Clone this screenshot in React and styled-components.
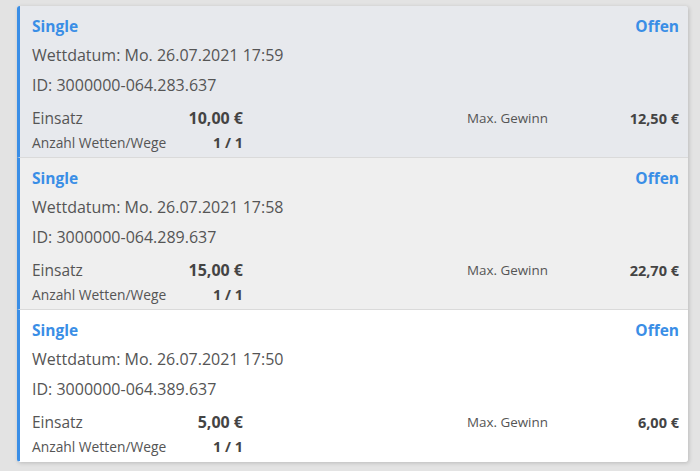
import styled, { createGlobalStyle } from "styled-components";

const GlobalStyle = createGlobalStyle`
    html, body {
        margin: 0;
        padding: 0;
        background: #e3e3e3;
        font-family: "Open Sans", "Noto Sans", sans-serif;
    }
`;

const Page = styled.div`
    width: 700px;
    height: 471px;
    padding: 6px 12px 0 17px;
    box-sizing: border-box;
    background: #e3e3e3;
`;

const List = styled.div`
    display: flex;
    flex-direction: column;
    width: 671px;
    border-radius: 3px;
    box-shadow: 1px 1px 4px rgba(0, 0, 0, 0.18);
`;

const Card = styled.div`
    background: ${(p) => p.$bg};
    border-left: 3px solid #3a8ee6;
    border-bottom: 1px solid ${(p) => (p.$last ? "transparent" : "#dadada")};
    border-radius: ${(p) => p.$radius};
    padding: 10px 9px 6px 12px;
    color: #555;
`;

const Header = styled.div`
    display: flex;
    justify-content: space-between;
    align-items: center;
    height: 20px;
    font-size: 15.5px;
    font-weight: 700;
    color: #3a8ee6;
`;

const InfoLine = styled.div`
    font-size: 16px;
    line-height: 20px;
    margin-top: ${(p) => p.$gap}px;
    color: #555;
`;

const Stakes = styled.div`
    display: grid;
    grid-template-columns: 211px 1fr 212px;
    margin-top: 13px;
`;

const Group = styled.div`
    display: flex;
    flex-direction: column;
    gap: 5px;
`;

const Pair = styled.div`
    display: flex;
    justify-content: space-between;
    align-items: center;
    height: ${(p) => (p.$small ? 18 : 20)}px;
`;

const Label = styled.span`
    font-size: ${(p) => p.$size}px;
    color: #555;
`;

const Value = styled.span`
    font-size: ${(p) => p.$size}px;
    font-weight: 700;
    color: #444;
`;

const bets = [
    { date: "Mo. 26.07.2021 17:59", id: "3000000-064.283.637", stake: "10,00 €", win: "12,50 €", bg: "#e7e9ed" },
    { date: "Mo. 26.07.2021 17:58", id: "3000000-064.289.637", stake: "15,00 €", win: "22,70 €", bg: "#efefef" },
    { date: "Mo. 26.07.2021 17:50", id: "3000000-064.389.637", stake: "5,00 €", win: "6,00 €", bg: "#ffffff" },
];

export default function App() {
    return (
        <>
            <GlobalStyle />
            <Page>
                <List>
                    {bets.map((b, i) => (
                        <Card
                            key={b.id}
                            $bg={b.bg}
                            $last={i === bets.length - 1}
                            $radius={i === 0 ? "3px 3px 0 0" : i === bets.length - 1 ? "0 0 3px 3px" : "0"}
                        >
                            <Header>
                                <span>Single</span>
                                <span>Offen</span>
                            </Header>
                            <InfoLine $gap={9}>Wettdatum: {b.date}</InfoLine>
                            <InfoLine $gap={10}>ID: {b.id}</InfoLine>
                            <Stakes>
                                <Group>
                                    <Pair>
                                        <Label $size={15.5}>Einsatz</Label>
                                        <Value $size={16}>{b.stake}</Value>
                                    </Pair>
                                    <Pair $small>
                                        <Label $size={13.8}>Anzahl Wetten/Wege</Label>
                                        <Value $size={14.5}>1 / 1</Value>
                                    </Pair>
                                </Group>
                                <div />
                                <Group>
                                    <Pair>
                                        <Label $size={13.4}>Max. Gewinn</Label>
                                        <Value $size={14.5}>{b.win}</Value>
                                    </Pair>
                                </Group>
                            </Stakes>
                        </Card>
                    ))}
                </List>
            </Page>
        </>
    );
}
